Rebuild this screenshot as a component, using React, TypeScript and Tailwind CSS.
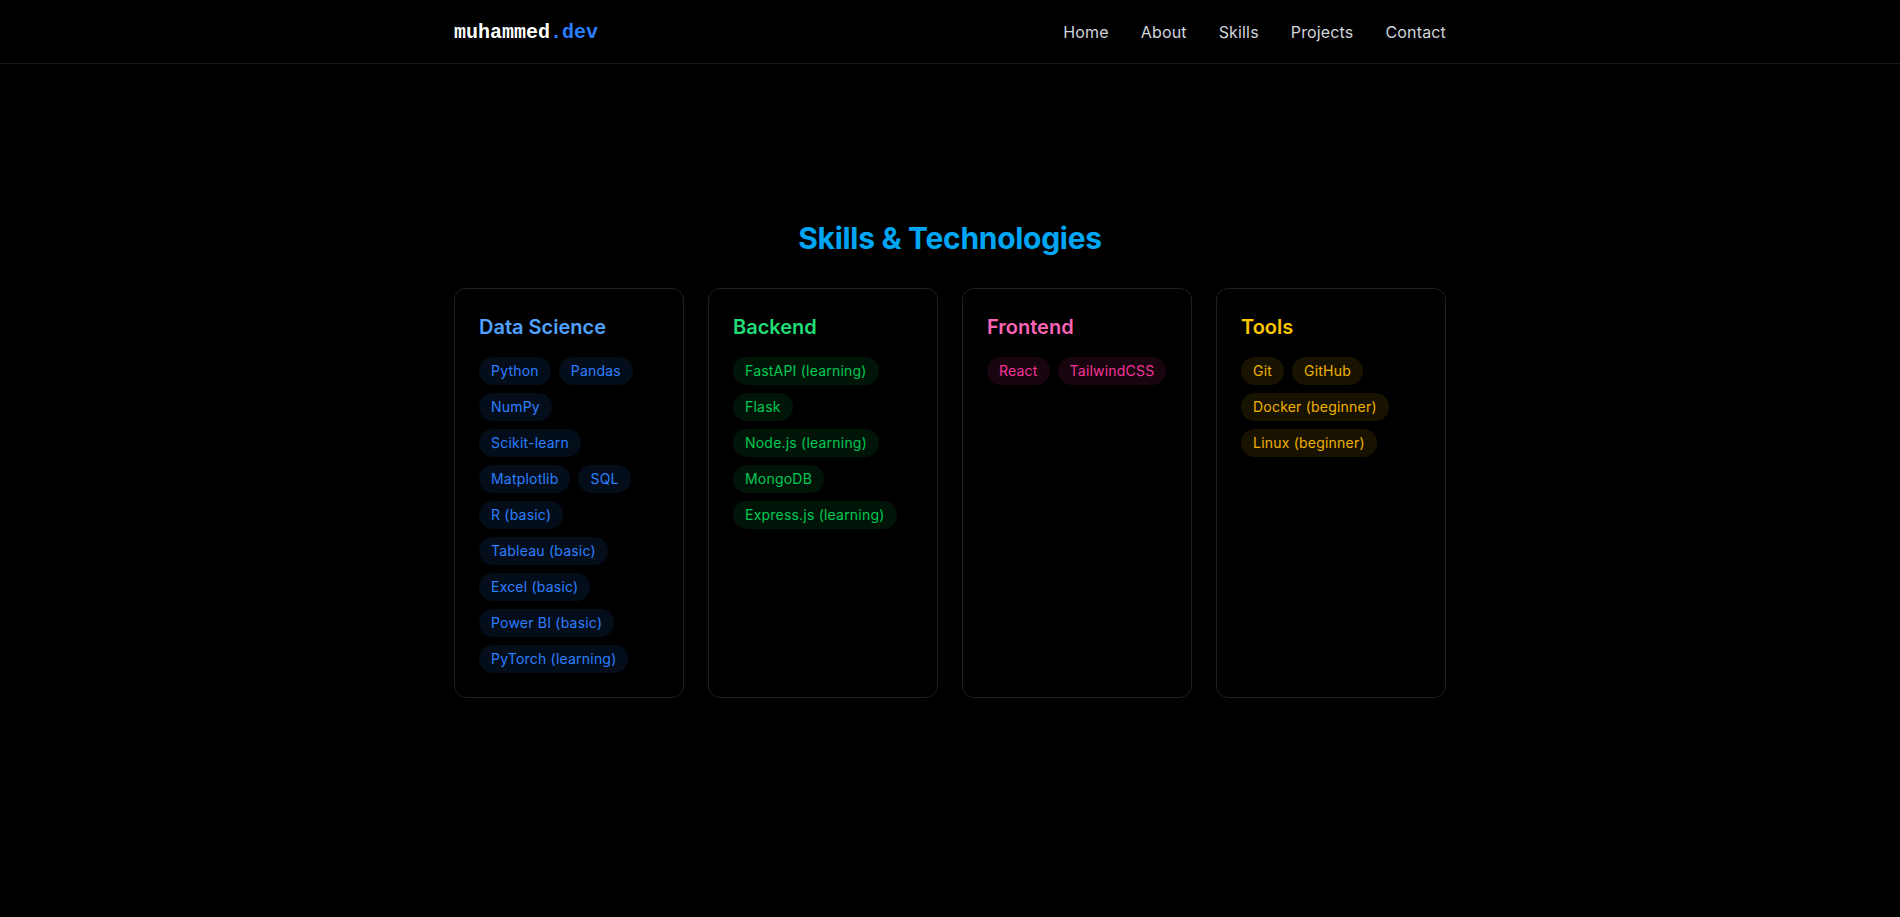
import React from 'react';

const groups = [
  {
    title: 'Data Science',
    titleColor: 'text-blue-400',
    tag: 'text-blue-500 bg-blue-500/10',
    items: [
      'Python',
      'Pandas',
      'NumPy',
      'Scikit-learn',
      'Matplotlib',
      'SQL',
      'R (basic)',
      'Tableau (basic)',
      'Excel (basic)',
      'Power BI (basic)',
      'PyTorch (learning)',
    ],
  },
  {
    title: 'Backend',
    titleColor: 'text-[#22dd77]',
    tag: 'text-green-500 bg-green-500/10',
    items: ['FastAPI (learning)', 'Flask', 'Node.js (learning)', 'MongoDB', 'Express.js (learning)'],
  },
  {
    title: 'Frontend',
    titleColor: 'text-pink-400',
    tag: 'text-pink-500 bg-pink-500/10',
    items: ['React', 'TailwindCSS'],
  },
  {
    title: 'Tools',
    titleColor: 'text-yellow-400',
    tag: 'text-yellow-500 bg-yellow-500/10',
    items: ['Git', 'GitHub', 'Docker (beginner)', 'Linux (beginner)'],
  },
];

const navLinks = ['Home', 'About', 'Skills', 'Projects', 'Contact'];

export default function App() {
  return (
    <div className="min-h-screen bg-black text-white font-['Inter',sans-serif]">
      {/* Header */}
      <header className="fixed top-0 inset-x-0 z-10 h-16 bg-black border-b border-white/10">
        <div className="max-w-5xl mx-auto px-4 h-full flex items-center justify-between">
          <a className="text-xl font-bold font-['Liberation_Mono',monospace] text-white pt-0.5">
            muhammed<span className="text-blue-500">.dev</span>
          </a>
          <nav className="flex items-center gap-8 text-base text-gray-300 tracking-[0.01em]">
            {navLinks.map((l) => (
              <a key={l} className="hover:text-white">
                {l}
              </a>
            ))}
          </nav>
        </div>
      </header>

      {/* Skills */}
      <section className="min-h-screen flex items-center justify-center">
        <div className="max-w-5xl w-full mx-auto px-4">
          <h2 className="text-3xl font-bold text-center text-sky-500 mb-8 tracking-[-0.01em]">
            Skills &amp; Technologies
          </h2>
          <div className="grid grid-cols-4 gap-6">
            {groups.map((g) => (
              <div key={g.title} className="rounded-xl border border-[#1f1f1f] bg-black p-6">
                <h3 className={`text-xl font-semibold mb-4 ${g.titleColor}`}>{g.title}</h3>
                <div className="flex flex-wrap gap-2">
                  {g.items.map((s) => (
                    <span key={s} className={`px-3 py-1 rounded-full text-sm tracking-[0.015em] ${g.tag}`}>
                      {s}
                    </span>
                  ))}
                </div>
              </div>
            ))}
          </div>
        </div>
      </section>
    </div>
  );
}
